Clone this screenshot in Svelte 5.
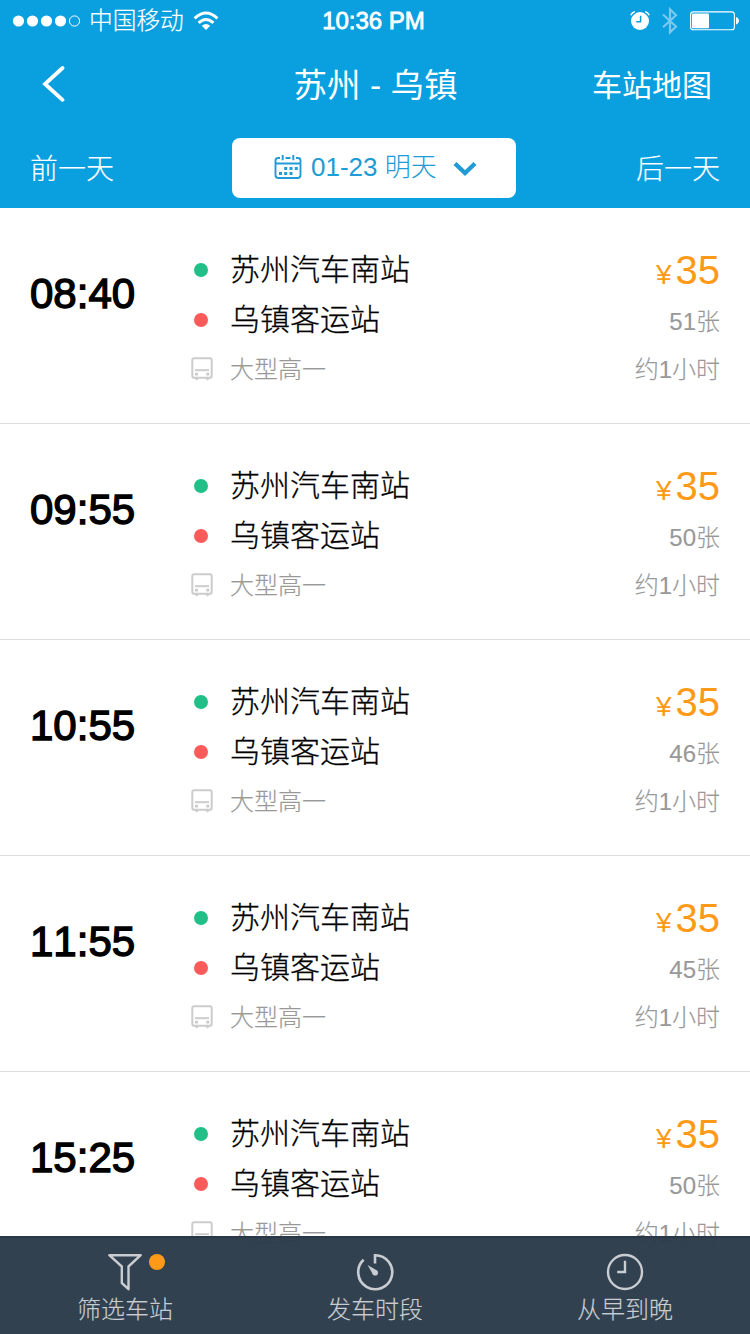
<script>
  const trips = [
    { time: '08:40', seats: 51 },
    { time: '09:55', seats: 50 },
    { time: '10:55', seats: 46 },
    { time: '11:55', seats: 45 },
    { time: '15:25', seats: 50 }
  ];
</script>

<div class="screen">
  <header>
    <div class="status">
      <div class="carrier">
        <svg width="70" height="14" viewBox="0 0 70 14" fill="#fff">
          <circle cx="6.5" cy="7" r="5.6" /><circle cx="20.5" cy="7" r="5.6" />
          <circle cx="34.5" cy="7" r="5.6" /><circle cx="48.5" cy="7" r="5.6" />
          <circle cx="62.5" cy="7" r="5.1" fill="none" stroke="#fff" />
        </svg>
        <span class="network">中国移动</span>
        <svg width="26" height="20" viewBox="0 0 26 20" fill="none" stroke="#fff" stroke-width="3">
          <path d="M1.6 7.4Q13-3.4 24.4 7.4" />
          <path d="M5.6 11.9Q13 5 20.4 11.9" />
          <path d="M13 19L8.8 14.8Q13 11.2 17.2 14.8Z" fill="#fff" stroke="none" />
        </svg>
      </div>
      <div class="clock">10:36 PM</div>
      <div class="indicators">
        <svg width="20" height="20" viewBox="0 0 20 20">
          <circle cx="10" cy="10" r="9" fill="#fff" />
          <path d="M.8 4.2Q2 1.4 4.8 .7M19.2 4.2Q18 1.4 15.2 .7" fill="none" stroke="#0a9fdf" stroke-width="4" />
          <path d="M.8 4.2Q2 1.4 4.8 .7M19.2 4.2Q18 1.4 15.2 .7" fill="none" stroke="#fff" stroke-width="1.6" />
          <path d="M10.6 4.8V10.8H6.2" fill="none" stroke="#0a9fdf" stroke-width="1.5" />
        </svg>
        <svg width="16" height="28" viewBox="0 0 16 28">
          <path d="M1 7.5L14 19.5L8 25.3V2.3L14 8.2L1 20.2" fill="none" stroke="#78caee" stroke-width="2.2" />
        </svg>
        <svg width="49" height="20" viewBox="0 0 49 20">
          <rect x=".6" y=".9" width="43.8" height="17.8" rx="2.8" fill="none" stroke="#fff" stroke-width="1.1" />
          <rect x="2" y="2.5" width="17" height="14.8" rx="1" fill="#fff" />
          <path d="M46 6.3H47Q49 8 49 9.8T47 13.3H46Z" fill="#fff" />
        </svg>
      </div>
    </div>

    <div class="nav">
      <svg class="back" width="24" height="36" viewBox="0 0 24 36">
        <path d="M20.5 2L3 18L20.5 33.8" fill="none" stroke="#fff" stroke-width="3.8" stroke-linecap="round" />
      </svg>
      <h1>苏州 - 乌镇</h1>
      <div class="map">车站地图</div>
    </div>

    <div class="days">
      <div class="day">前一天</div>
      <div class="picker">
        <svg width="28" height="26" viewBox="0 0 28 26">
          <path d="M6 4H4Q1.5 4 1.5 6.5V21Q1.5 24 4.5 24H23.5Q26.5 24 26.5 21V6.5Q26.5 4 24 4H22M11.5 4H16.5M1.5 9.5H26.5M8.7 1V6.2M19.3 1V6.2" fill="none" stroke="#209bd5" stroke-width="1.9" />
          <path d="M10.2 13h3v3h-3zM15.5 13h3v3h-3zM20.8 13h3v3h-3zM5 18h3v3h-3zM10.2 18h3v3h-3zM15.5 18h3v3h-3z" fill="#209bd5" />
        </svg>
        <span>01-23 明天</span>
        <svg class="chevron" width="24" height="16" viewBox="0 0 24 16">
          <path d="M2 2.5L12 12L22 2.5" fill="none" stroke="#209bd5" stroke-width="4.4" />
        </svg>
      </div>
      <div class="day next">后一天</div>
    </div>
  </header>

  <main>
    {#each trips as trip}
      <article>
        <div class="time">{trip.time}</div>
        <div class="route">
          <div class="stop"><i class="dot"></i><span>苏州汽车南站</span></div>
          <div class="stop"><i class="dot end"></i><span>乌镇客运站</span></div>
          <div class="coach">
            <svg width="22" height="26" viewBox="0 0 22 26">
              <rect x="1.3" y="1.3" width="19.4" height="19.4" rx="1.8" fill="none" stroke="#ccc" stroke-width="2" />
              <path d="M4 13.2H18" stroke="#ccc" stroke-width="2" />
              <path d="M4 15.7h3v2.8H4zM15.3 15.7h3v2.8h-3zM4 21h3.4v1L5.7 23.4 4 22zM14.9 21h3.4v1l-1.7 1.4-1.7-1.4z" fill="#ccc" />
            </svg>
            <span>大型高一</span>
          </div>
        </div>
        <div class="fare">
          <div class="price"><small>¥</small>35</div>
          <div class="seats">{trip.seats}张</div>
          <div class="duration">约1小时</div>
        </div>
      </article>
    {/each}
  </main>

  <footer>
    <div class="tab">
      <svg width="36" height="38" viewBox="0 0 36 38">
        <path d="M2.3 2.2H33.7L21.5 13.5V36.2L14.8 30V13.5Z" fill="none" stroke="#c9cdd2" stroke-width="2.4" stroke-linejoin="round" />
      </svg>
      <i class="badge"></i>
      <span>筛选车站</span>
    </div>
    <div class="tab">
      <svg width="38" height="38" viewBox="0 0 38 38">
        <path d="M7.6 6.8A17 17 0 1 0 19 2.2V10.5" fill="none" stroke="#c9cdd2" stroke-width="2.6" />
        <path d="M11.6 12L21 17.6L17 21.6Z" fill="#c9cdd2" />
        <circle cx="19.2" cy="19.8" r="2.8" fill="#c9cdd2" />
      </svg>
      <span>发车时段</span>
    </div>
    <div class="tab">
      <svg width="38" height="38" viewBox="0 0 38 38" fill="none" stroke="#c9cdd2">
        <circle cx="19" cy="19" r="17" stroke-width="2.4" />
        <path d="M19 7.8V19H11.2" stroke-width="2.4" />
      </svg>
      <span>从早到晚</span>
    </div>
  </footer>
</div>

<style>
  :global(body) { margin: 0; }
  .screen {
    position: relative;
    width: 750px;
    height: 1334px;
    overflow: hidden;
    background: #fff;
    color: #000;
    font-family: "Liberation Sans", "Noto Sans CJK SC", sans-serif;
    font-weight: 300;
    font-kerning: none;
  }
  svg { display: block; flex: none; }
  header { height: 208px; background: #0a9fdf; color: #fff; }
  .status { display: grid; grid-template-columns: 1fr auto 1fr; height: 40px; align-items: center; padding: 0 11px 0 12px; }
  .carrier { display: flex; align-items: center; font-size: 23.7px; line-height: 40px; }
  .network { margin: 1px 9px 0 7px; -webkit-text-stroke: .2px #fff; }
  .clock { font-size: 24px; line-height: 40px; margin: 0 4px 0 0; -webkit-text-stroke: .8px #fff; }
  .indicators { display: flex; justify-content: flex-end; align-items: center; gap: 12px; }
  .nav { display: grid; grid-template-columns: 1fr auto 1fr; align-items: center; height: 88px; padding: 0 38px 0 42px; }
  h1 { margin: 0 3px 0 0; padding-top: 3px; font-size: 33.5px; line-height: 48px; font-weight: 400; }
  .map { padding-top: 4px; font-size: 30px; line-height: 48px; text-align: right; font-weight: 400; }
  .days { display: flex; align-items: center; height: 60px; padding: 10px 30px 0; }
  .day { width: 202px; font-size: 28px; line-height: 60px; padding-top: 4px; -webkit-text-stroke: .15px #fff; }
  .next { width: auto; margin-left: auto; text-align: right; }
  .picker { box-sizing: border-box; display: flex; align-items: center; width: 284px; height: 60px; padding-left: 42px; border-radius: 8px; background: #fff; color: #209bd5; font-size: 26px; line-height: 58px; padding-bottom: 2px; }
  .picker span { margin-left: 9px; white-space: nowrap; }
  .chevron { margin: 3px 0 0 16px; }
  article { box-sizing: border-box; display: flex; height: 216px; padding: 37px 30px 0; border-bottom: 1px solid #dcdcdc; }
  .time { width: 161px; font-size: 42px; line-height: 98px; -webkit-text-stroke: 1.4px #000; }
  .route { flex: 1; }
  .stop { display: flex; align-items: center; height: 50px; font-size: 30px; line-height: 50px; -webkit-text-stroke: .3px #000; }
  .dot { width: 14px; height: 14px; margin: 0 22px 0 3px; border-radius: 50%; background: #22c088; }
  .end { background: #ff5a5a; }
  .coach { display: flex; align-items: center; gap: 17px; height: 50px; font-size: 24px; line-height: 50px; color: #999; -webkit-text-stroke: .2px #999; }
  .fare { text-align: right; color: #999; font-size: 24px; line-height: 50px; }
  .fare div { height: 50px; }
  .fare .seats { line-height: 54px; }
  .seats, .duration { -webkit-text-stroke: .15px #999; }
  .price { color: #ff9a18; font-size: 40px; }
  .price small { margin-right: 4px; font-size: 28px; }
  footer { position: absolute; left: 0; right: 0; bottom: 0; box-sizing: border-box; display: flex; height: 98px; border-top: 2px solid #293746; background: rgba(43, 59, 74, .97); color: #c9cdd2; }
  .tab { position: relative; flex: 1; display: flex; flex-direction: column; align-items: center; padding-top: 15px; font-size: 24px; line-height: 38px; -webkit-text-stroke: .15px #c9cdd2; }
  .badge { position: absolute; left: 149px; top: 16px; width: 16px; height: 16px; border-radius: 50%; background: #ff9a18; }
</style>
